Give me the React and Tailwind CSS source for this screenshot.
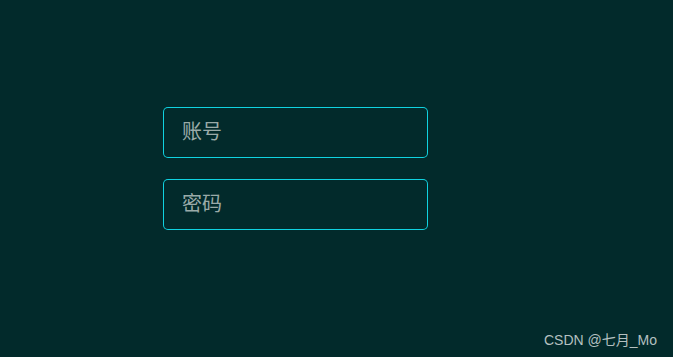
function Field({ label }) {
  return (
    <div className="w-[265px] h-[51px] rounded-[5px] bg-[#10d2e0] p-px">
      <div className="w-full h-full rounded-[4px] bg-[#022a2b] flex items-center pl-[18px] pb-[3px]">
        <span className="text-[20px] leading-none text-[#9aaaa8]">{label}</span>
      </div>
    </div>
  );
}

export default function App() {
  const font = { fontFamily: '"Noto Sans CJK SC", "Liberation Sans", sans-serif' };
  return (
    <div className="relative w-full h-[357px] bg-[#022a2b] overflow-hidden" style={font}>
      <div className="flex flex-col gap-[21px] pl-[163px] pt-[107px]">
        <Field label="账号" />
        <Field label="密码" />
      </div>
      <div className="absolute right-[16px] bottom-[6px] text-[14px] text-[#b4c0c0]" style={{ fontFamily: '"Liberation Sans", "Noto Sans CJK SC", sans-serif' }}>
        CSDN @七月_Mo
      </div>
    </div>
  );
}
